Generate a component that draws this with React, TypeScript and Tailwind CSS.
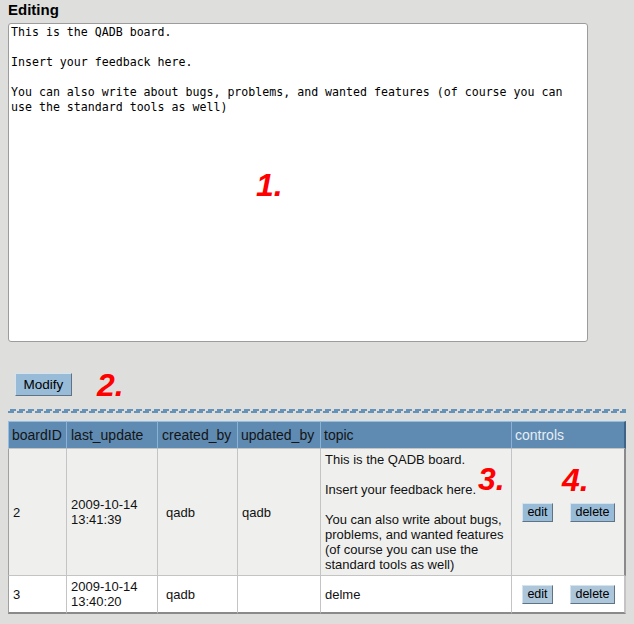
import React from "react";

const TEXT =
  "This is the QADB board.\n\nInsert your feedback here.\n\nYou can also write about bugs, problems, and wanted features (of course you can use the standard tools as well)";

function Btn({ label, w, light }: { label: string; w: string; light?: boolean }) {
  return (
    <button
      type="button"
      className={`${w} ${
        light ? "bg-[#adc6da]" : "bg-[#98bcd8]"
      } inline-flex h-[19px] items-center justify-center border border-t-[#d4e4ef] border-l-[#d4e4ef] border-r-[#5f7384] border-b-[#5f7384] p-0 text-[12.5px] leading-none text-black`}
    >
      {label}
    </button>
  );
}

function Mark({ children, className }: { children: React.ReactNode; className?: string }) {
  return (
    <span
      className={`pointer-events-none text-[32px] font-bold italic leading-[32px] text-[#ff0000] font-['Liberation_Sans',Arial,sans-serif] ${className ?? ""}`}
    >
      {children}
    </span>
  );
}

export default function App() {
  const th = "flex h-[28px] items-center border-t border-t-[#92bee5] border-b border-b-[#c4c4c4] bg-[#5f8bb2] pl-[3px] text-[14px] leading-[26px] text-[#141414]";
  const td1 = "flex items-center border-r border-b border-[#c4c4c4] bg-[#eff0ee] pl-[4px] text-[13px] leading-[15px]";
  const td2 = "flex items-center border-r border-b-2 border-r-[#c4c4c4] border-b-[#8a8a8a] bg-white pl-[4px] text-[13px] leading-[15px]";
  return (
    <div className="min-h-screen w-full bg-[#dedfdc] font-['Liberation_Sans',Arial,sans-serif] text-[#111]">
      <div className="w-[634px] px-[8px] pt-[1px]">
        <h2 className="text-[15px] font-bold leading-[18px] text-black">Editing</h2>

        <div className="relative mt-[4px] h-[319px] w-[580px]">
          <textarea
            readOnly
            defaultValue={TEXT}
            className="block h-full w-full resize-none overflow-hidden rounded-[3px] border border-[#9c9c9c] bg-white px-[2px] pt-[1px] font-['DejaVu_Sans_Mono',monospace] text-[11.6px] leading-[15px] text-black outline-none"
          />
          <Mark className="absolute left-[248px] top-[146px]">1.</Mark>
        </div>

        <div className="mt-[31px] flex h-[23px] items-center pl-[7px]">
          <button
            type="button"
            className="flex h-[23px] w-[57px] items-center justify-center border border-t-[#d4e4ef] border-l-[#d4e4ef] border-r-[#5f7384] border-b-[#5f7384] bg-[#98bcd8] p-0 text-[13.5px] leading-none text-black"
          >
            Modify
          </button>
          <Mark className="ml-[25px]">2.</Mark>
        </div>

        <div className="mt-[13px] w-[618px]">
          <div className="h-[2px] bg-[repeating-linear-gradient(90deg,transparent_0px,transparent_2px,#6792b8_2px,#6792b8_8px,transparent_8px,transparent_9px)]" />
          <div className="h-[2px] bg-[repeating-linear-gradient(90deg,#6792b8_0px,#6792b8_6px,transparent_6px,transparent_9px)]" />
        </div>

        <div className="mt-[8px] grid w-[618px] grid-cols-[59px_91px_80px_83px_191px_114px]">
          <div className={`${th} border-l border-l-[#92bee5] border-r border-r-[#8bb2d4]`}>boardID</div>
          <div className={`${th} border-r border-r-[#8bb2d4] pl-[4px]`}>last_update</div>
          <div className={`${th} border-r border-r-[#8bb2d4] pl-[4px]`}>created_by</div>
          <div className={`${th} border-r border-r-[#8bb2d4]`}>updated_by</div>
          <div className={`${th} border-r border-r-[#8bb2d4]`}>topic</div>
          <div className={`${th} border-r-2 border-r-[#3f6287] text-[#e6eef5]`}>controls</div>

          <div className={`${td1} border-l border-l-[#a0a0a0]`}>2</div>
          <div className={td1}>
            <span>
              2009-10-14
              <br />
              13:41:39
            </span>
          </div>
          <div className={`${td1} pl-[8px]`}>qadb</div>
          <div className={td1}>qadb</div>
          <div className={`${td1} relative items-start py-[3px]`}>
            <span>
              This is the QADB board.
              <br />
              <br />
              Insert your feedback here.
              <br />
              <br />
              You can also write about bugs,
              <br />
              problems, and wanted features
              <br />
              (of course you can use the
              <br />
              standard tools as well)
            </span>
            <Mark className="absolute left-[157px] top-[14px]">3.</Mark>
          </div>
          <div className={`${td1} relative gap-[17px] border-r-2 border-r-[#8a8a8a] pl-[10px]`}>
            <Btn label="edit" w="w-[31px]" />
            <Btn label="delete" w="w-[45px]" />
            <Mark className="absolute left-[50px] top-[15px]">4.</Mark>
          </div>

          <div className={`${td2} border-l border-l-[#a0a0a0]`}>3</div>
          <div className={`${td2} py-[3px]`}>
            <span>
              2009-10-14
              <br />
              13:40:20
            </span>
          </div>
          <div className={`${td2} pl-[8px]`}>qadb</div>
          <div className={td2}></div>
          <div className={td2}>delme</div>
          <div className={`${td2} gap-[17px] border-r-2 border-r-[#8a8a8a] pl-[10px]`}>
            <Btn label="edit" w="w-[31px]" light />
            <Btn label="delete" w="w-[45px]" light />
          </div>
        </div>
      </div>
    </div>
  );
}
